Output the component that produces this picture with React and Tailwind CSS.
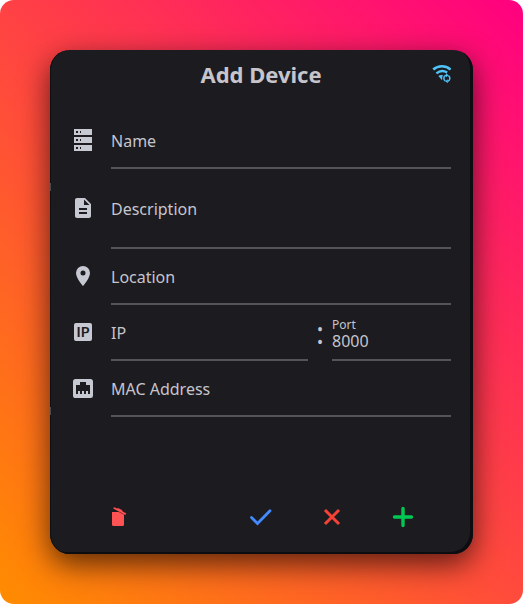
function Icon({ children, className = "" }) {
  return (
    <svg viewBox="0 0 24 24" className={`size-6 shrink-0 ${className}`} fill="currentColor" aria-hidden="true">
      {children}
    </svg>
  );
}

const ServerIcon = () => (
  <Icon>
    <path
      fillRule="evenodd"
      d="M3 1H21V7H3ZM5 3V5H7V3ZM9 3V5H10V3ZM3 9H21V15H3ZM5 11V13H7V11ZM9 11V13H10V11ZM3 17H21V23H3ZM5 19V21H7V19ZM9 19V21H10V19Z"
    />
  </Icon>
);

const DocumentIcon = () => (
  <Icon>
    <path d="M14 2H6c-1.1 0-1.99.9-1.99 2L4 20c0 1.1.89 2 1.99 2H18c1.1 0 2-.9 2-2V8l-6-6zm2 16H8v-2h8v2zm0-4H8v-2h8v2zm-3-5V3.5L18.5 9H13z" />
  </Icon>
);

const MarkerIcon = () => (
  <Icon>
    <path d="M12 11.5A2.5 2.5 0 0 1 9.5 9 2.5 2.5 0 0 1 12 6.5 2.5 2.5 0 0 1 14.5 9a2.5 2.5 0 0 1-2.5 2.5M12 2a7 7 0 0 0-7 7c0 5.25 7 13 7 13s7-7.75 7-13a7 7 0 0 0-7-7Z" />
  </Icon>
);

const IpIcon = () => (
  <span aria-hidden="true" className="flex size-6 shrink-0 items-center justify-center">
    <span className="flex size-[18px] items-center justify-center rounded-xs bg-[#c6c8d2] font-[Lato,sans-serif] text-sm leading-none font-bold text-[#1c1b20]">
      IP
    </span>
  </span>
);

const EthernetIcon = () => (
  <Icon>
    <path d="M7,15H9V18H11V15H13V18H15V15H17V18H19V9H15V6H9V9H5V18H7V15M4.38,3H19.63C20.94,3 22,4.06 22,5.38V19.63A2.37,2.37 0 0,1 19.63,22H4.38C3.06,22 2,20.94 2,19.63V5.38C2,4.06 3.06,3 4.38,3Z" />
  </Icon>
);

const WifiSyncIcon = () => (
  <svg viewBox="0 0 20 20" className="size-5" fill="none" stroke="currentColor" aria-hidden="true">
    <path d="M2.2 5.6C7.2 1.2 14.6 1.2 19.6 5.6" strokeWidth="2.6" />
    <path d="M5.4 9.4C8.6 6.7 13 6.6 16.2 8.6" strokeWidth="2.4" />
    <path d="M7.4 12C8.6 11 10.4 10.7 12 11.2C11.2 12.4 11 13.8 11.4 15L10.8 16Z" fill="currentColor" stroke="none" />
    <path d="M14.4 17A3.2 3.2 0 0 1 15 11.2M17.4 11.6A3.2 3.2 0 0 1 17 17.2" strokeWidth="1.5" />
    <path d="M15 9.2L17.6 11.2L15 13.2ZM16.8 15.2L14.2 17.2L16.8 19.2Z" fill="currentColor" stroke="none" />
  </svg>
);

const TrashIcon = () => (
  <Icon>
    <path d="M5 7H12L17 9.5V19.5Q17 21 15.5 21H6.5Q5 21 5 19.5Z" />
    <path d="M6 3.6L7 2L10 3.3L11.2 3L15.2 5.1L15.8 6.4L19.4 8.2L18.3 10.2Z" stroke="#1c1b20" strokeWidth=".3" />
  </Icon>
);

const CheckIcon = () => (
  <Icon>
    <path d="M2.5 12.5L8.5 18.5L21 5.8" fill="none" stroke="currentColor" strokeWidth="2.8" strokeLinecap="round" />
  </Icon>
);

const CrossIcon = () => (
  <Icon>
    <path d="M6 6L18 18M18 6L6 18" fill="none" stroke="currentColor" strokeWidth="3" strokeLinecap="square" />
  </Icon>
);

const PlusIcon = () => (
  <Icon>
    <path d="M12 3.5V20.5M3.5 12H20.5" fill="none" stroke="currentColor" strokeWidth="3.4" strokeLinecap="round" />
  </Icon>
);

function Field({ id, label, value, tall = false }) {
  const height = tall ? "h-20" : "h-14";
  if (value) {
    return (
      <div className="flex h-14 min-w-0 flex-1 flex-col border-b-2 border-[#55545a] pt-3">
        <label htmlFor={id} className="text-xs leading-4">{label}</label>
        <input id={id} defaultValue={value} className="h-4 w-full bg-transparent leading-4 outline-none" />
      </div>
    );
  }
  return (
    <div className={`grid min-w-0 flex-1 items-center border-b-2 border-[#55545a] pt-0.5 ${height}`}>
      <input id={id} placeholder=" " className="peer col-start-1 row-start-1 h-6 w-full bg-transparent outline-none" />
      <label htmlFor={id} className="invisible pointer-events-none col-start-1 row-start-1 leading-6 peer-placeholder-shown:visible">
        {label}
      </label>
    </div>
  );
}

function Row({ icon, children }) {
  return (
    <div className="flex items-center gap-4">
      <span className="pb-0.5 text-[#c6c8d2]">{icon}</span>
      {children}
    </div>
  );
}

export default function App() {
  return (
    <div className="min-h-screen bg-white font-['Noto_Sans',sans-serif]">
      <main className="flex min-h-screen rounded-[14px] bg-linear-[45deg,#ff8c00,#ff0080] p-[50px]">
        <form
          onSubmit={(e) => e.preventDefault()}
          className="relative flex flex-1 flex-col rounded-[20px] bg-[#1c1b20] pr-[22px] pl-[21px] text-base text-[#c6c5cc] shadow-[0_10px_30px_rgba(0,0,0,0.65),inset_-3px_-2px_0_#0c0d11,inset_1px_0_0_#101014]"
        >
          <span className="absolute top-[133px] left-0 h-2 w-px bg-[#494950]" />
          <span className="absolute top-[357px] left-0 h-2 w-px bg-[#494950]" />

          <header className="grid h-12 grid-cols-[1fr_auto_1fr] items-center">
            <h1 className="col-start-2 text-[22px] leading-8 font-bold">Add Device</h1>
            <button type="button" aria-label="Scan network" className="justify-self-end text-[#4fc3f7]">
              <WifiSyncIcon />
            </button>
          </header>

          <div className="mt-[15px] flex flex-col">
            <Row icon={<ServerIcon />}><Field id="name" label="Name" /></Row>
            <Row icon={<DocumentIcon />}><Field id="description" label="Description" tall /></Row>
            <Row icon={<MarkerIcon />}><Field id="location" label="Location" /></Row>
            <Row icon={<IpIcon />}>
              <div className="grid min-w-0 flex-1 grid-cols-[197fr_24px_119fr]">
                <Field id="ip" label="IP" />
                <span className="self-center text-center text-3xl leading-6">:</span>
                <Field id="port" label="Port" value="8000" />
              </div>
            </Row>
            <Row icon={<EthernetIcon />}><Field id="mac" label="MAC Address" /></Row>
          </div>

          <footer className="mt-auto grid grid-cols-5 justify-items-center px-3 pt-6 pb-[25px]">
            <button type="button" aria-label="Clear" className="text-[#ff5252]"><TrashIcon /></button>
            <button type="submit" aria-label="Save" className="col-start-3 text-[#448aff]"><CheckIcon /></button>
            <button type="button" aria-label="Cancel" className="text-[#f44336]"><CrossIcon /></button>
            <button type="button" aria-label="Add" className="text-[#00c853]"><PlusIcon /></button>
          </footer>
        </form>
      </main>
    </div>
  );
}
